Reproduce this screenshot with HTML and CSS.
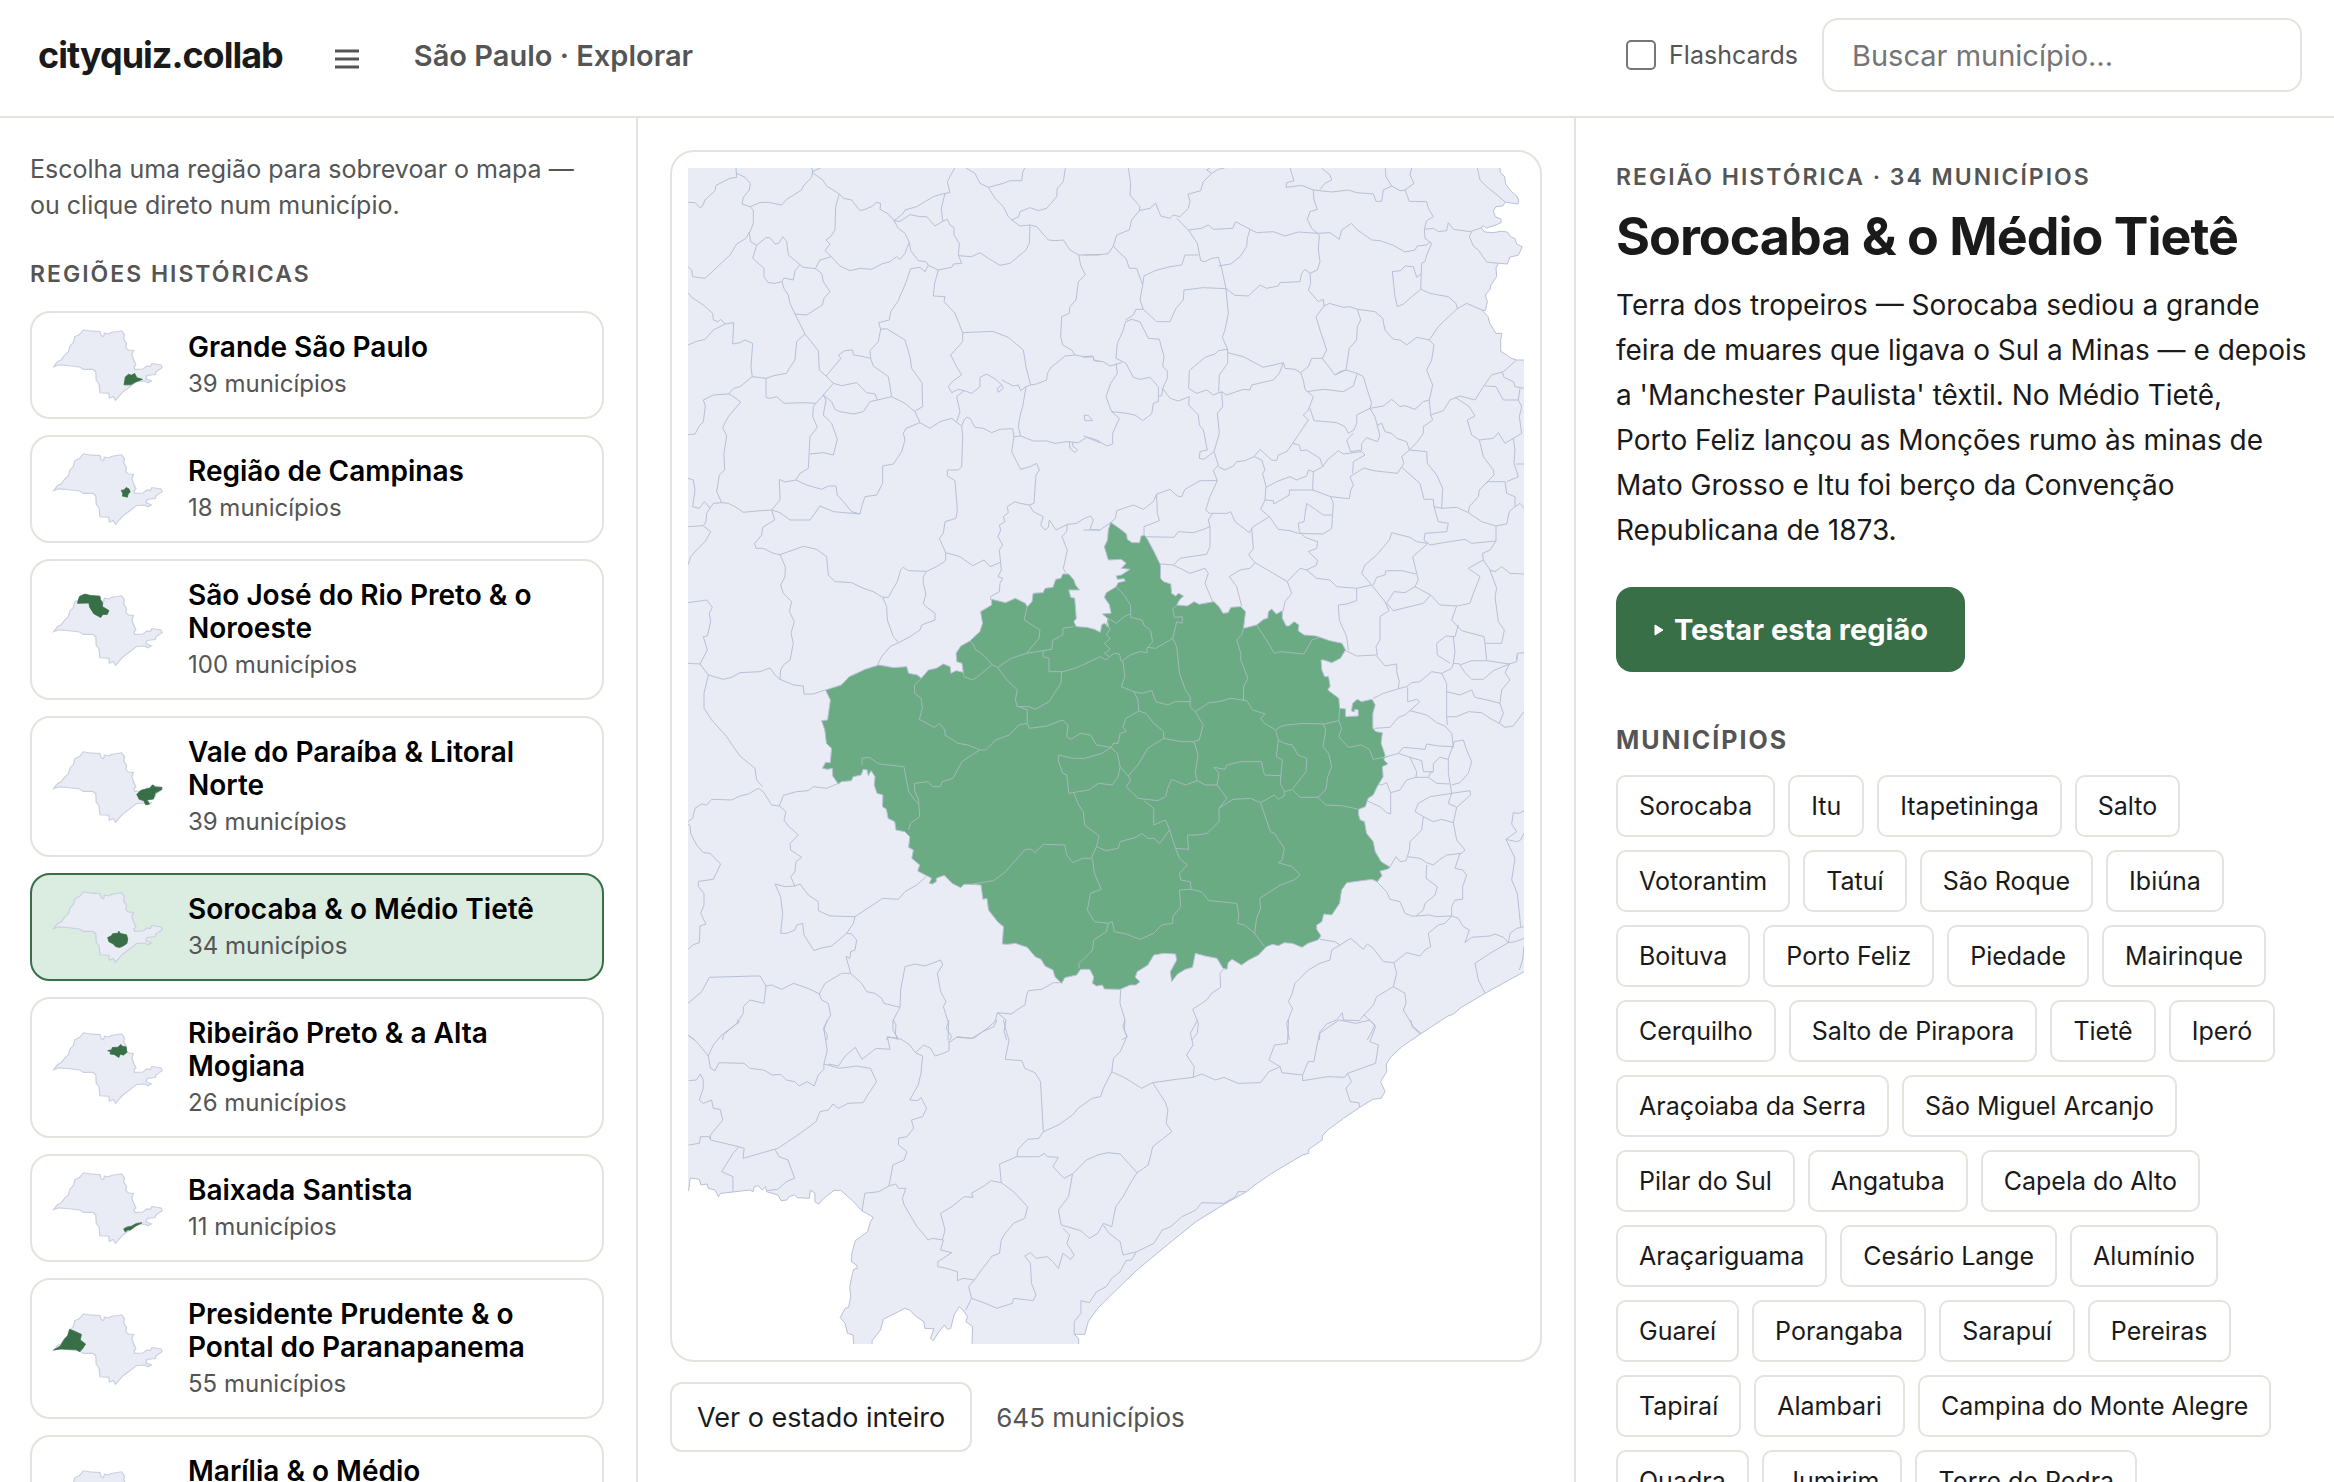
FILE: index.html
```html
<!DOCTYPE html>
<html lang="pt-BR">
<head>
<meta charset="utf-8">
<meta name="viewport" content="width=device-width, initial-scale=1">
<title>cityquiz.collab</title>
<link rel="stylesheet" href="styles.css">
</head>
<body>
<svg class="defs" aria-hidden="true">
  <symbol id="state" viewBox="0 0 112 76">
    <path class="mini-land" transform="scale(.4095 .3444) translate(-128 -90)" d="M132 205 142 190 150 186 160 170 168 162 172 145 180 135 184 118 195 112 205 98 225 102 245 103 248 115 254 118 256 108 268 110 272 106 298 101 305 113 303 125 310 138 308 150 315 157 327 158 323 170 327 185 333 200 328 206 330 213 350 212 360 203 368 205 372 196 394 200 397 208 382 220 380 228 360 231 357 240 371 246 362 252 355 247 335 248 320 262 300 280 283 303 278 292 268 297 267 282 245 281 243 255 236 245 235 220 228 213 205 213 195 206 165 202 145 200Z"/>
  </symbol>
</svg>

<header class="topbar">
  <a class="brand" href="#">cityquiz.collab</a>
  <button class="menu" type="button" aria-label="Menu">
    <svg width="24" height="20" viewBox="0 0 24 20"><path d="M0 2h24M0 10h24M0 18h24" stroke="currentColor" stroke-width="3"/></svg>
  </button>
  <span class="crumb">São Paulo · Explorar</span>
  <label class="flash"><input type="checkbox">Flashcards</label>
  <input class="search" type="search" placeholder="Buscar município…" aria-label="Buscar município">
</header>

<div class="layout">
  <aside class="sidebar">
    <p class="hint">Escolha uma região para sobrevoar o mapa — ou clique direto num município.</p>
    <h2 class="label">Regiões históricas</h2>
    <div class="regions">
      <button class="region" type="button">
        <svg class="mini" viewBox="0 0 112 76"><use href="#state"/><path class="mini-area" transform="scale(.4095 .3444) translate(-128 -90)" d="M304 258 307 235 315 227 322 230 330 225 335 237 349 242 332 250 320 258Z"/></svg>
        <span class="region-text"><span class="name">Grande São Paulo</span><span class="count">39 municípios</span></span>
      </button>
      <button class="region" type="button">
        <svg class="mini" viewBox="0 0 112 76"><use href="#state"/><path class="mini-area" transform="scale(.4095 .3444) translate(-128 -90)" d="M297 204 304 203 309 196 316 200 319 209 314 215 312 224 300 221 301 214Z"/></svg>
        <span class="region-text"><span class="name">Região de Campinas</span><span class="count">18 municípios</span></span>
      </button>
      <button class="region" type="button">
        <svg class="mini" viewBox="0 0 112 76"><use href="#state"/><path class="mini-area" transform="scale(.4095 .3444) translate(-128 -90)" d="M190 123 195 103 208 96 222 100 245 102 246 112 252 122 251 132 267 144 263 155 252 155 247 164 230 153 220 134 218 122Z"/></svg>
        <span class="region-text"><span class="name">São José do Rio Preto &amp; o Noroeste</span><span class="count">100 municípios</span></span>
      </button>
      <button class="region" type="button">
        <svg class="mini" viewBox="0 0 112 76"><use href="#state"/><path class="mini-area" transform="scale(.4095 .3444) translate(-128 -90)" d="M335 222 345 210 366 204 374 194 380 200 397 202 395 208 380 218 376 235 360 238 366 250 357 252 352 240 341 236Z"/></svg>
        <span class="region-text"><span class="name">Vale do Paraíba &amp; Litoral Norte</span><span class="count">39 municípios</span></span>
      </button>
      <button class="region selected" type="button" aria-pressed="true">
        <svg class="mini" viewBox="0 0 112 76"><use href="#state"/><path class="mini-area" transform="scale(.4095 .3444) translate(-128 -90)" d="M264 231 273 226 276 220 290 218 291 212 295 219 310 223 313 235 311 248 301 256 293 260 283 257 278 250 267 243Z"/></svg>
        <span class="region-text"><span class="name">Sorocaba &amp; o Médio Tietê</span><span class="count">34 municípios</span></span>
      </button>
      <button class="region" type="button">
        <svg class="mini" viewBox="0 0 112 76"><use href="#state"/><path class="mini-area" transform="scale(.4095 .3444) translate(-128 -90)" d="M264 150 274 147 275 141 289 140 296 132 300 137 309 139 311 155 302 163 295 160 291 170 280 161 270 160 271 153Z"/></svg>
        <span class="region-text"><span class="name">Ribeirão Preto &amp; a Alta Mogiana</span><span class="count">26 municípios</span></span>
      </button>
      <button class="region" type="button">
        <svg class="mini" viewBox="0 0 112 76"><use href="#state"/><path class="mini-area" transform="scale(.4095 .3444) translate(-128 -90)" d="M303 261 307 270 313 264 320 264 331 254 348 243 334 245 322 253 310 256Z"/></svg>
        <span class="region-text"><span class="name">Baixada Santista</span><span class="count">11 municípios</span></span>
      </button>
      <button class="region" type="button">
        <svg class="mini" viewBox="0 0 112 76"><use href="#state"/><path class="mini-area" transform="scale(.4095 .3444) translate(-128 -90)" d="M132 203 148 192 158 172 166 162 171 143 186 150 200 158 197 174 210 186 203 199 196 208 186 202 165 201 150 200Z"/></svg>
        <span class="region-text"><span class="name">Presidente Prudente &amp; o Pontal do Paranapanema</span><span class="count">55 municípios</span></span>
      </button>
      <button class="region" type="button">
        <svg class="mini" viewBox="0 0 112 76"><use href="#state"/></svg>
        <span class="region-text"><span class="name">Marília &amp; o Médio Paranapanema</span><span class="count">51 municípios</span></span>
      </button>
    </div>
  </aside>

  <main class="stage">
    <div class="map-card">
      <svg class="map" viewBox="688 168 836 1176" role="img" aria-label="Mapa dos municípios">
        <rect class="land" x="688" y="168" width="836" height="1177"/>
        <!-- north-west municipalities -->
        <path class="line" transform="translate(660 140) scale(.33333)" d="M84 187 105 188 120 203 128 198 135 180 165 152 168 136 210 115 230 112 228 84M230 100 255 112 271 130 268 150 250 172 246 192 270 200 300 188 325 187 365 195 380 178 425 150 430 138 455 112 458 94 482 84M455 84 460 100 488 120 500 138 538 162 550 175 575 180 600 212 615 208 635 200 650 187 662 190 660 208 685 222 702 242 715 265 735 280 748 308 752 332 775 362 798 365 805 376 835 390 875 382 880 372 905 370 895 345 898 310 882 285 882 262 870 255 862 238 848 244 825 258 800 230 780 230 750 224 720 244 702 242M702 242 728 222 735 210 770 200 820 170 855 160 870 158 862 125 884 84M855 160 850 180 844 205 848 244M538 162 527 200 525 270 512 290 498 300 510 312 495 332 514 350 480 360 466 386 430 382 420 374 385 345 380 305 368 290 356 310 345 312 330 293 318 293 290 316 272 305 268 280 280 250 280 210 270 200M268 276 258 295 230 312 210 345 160 392 135 415 98 410 95 390 84 380M290 316 278 355 312 385 312 410 325 428 345 430 366 425 372 414 400 420 405 392 420 374M366 425 372 445 385 465 390 490 405 522 435 582 475 632 478 690 498 708 520 730 490 765 468 790 430 788 372 790 350 770 330 775 318 772 318 715 277 710M466 386 485 400 490 425 510 455 492 475 487 495 440 525 405 522M514 350 540 378 570 392 600 385 635 388 665 372 690 365 710 350 720 358 735 340 746 310M84 458 95 472 130 495 158 520 160 540 175 545 182 538 195 552 221 548 218 612 240 608 255 600 278 610 273 680 277 712M195 552 160 570 135 598 110 604 84 615M277 710 240 740 222 745 205 762 160 765 130 780 136 798 130 845 118 858 105 882 84 884M205 762 218 768 242 786 205 830 188 862 200 888 192 940 194 990 178 1005 170 1055 185 1088M318 715 345 706 380 700 388 685 405 660 410 605 435 582M835 390 824 430 820 468 855 470 852 485 885 520 908 578 998 574 1045 592 1090 630 1098 680 1112 735M805 376 795 395 780 382 752 386 735 435 720 468 715 482 692 515 688 540 656 548 662 568 655 605 630 632 632 655 600 648 580 645 578 630 555 632 535 645 543 655 498 708M662 568 680 566 735 600 750 650 755 685 786 728 788 800 762 815M632 655 640 678 685 710 695 770 652 780 630 785 610 815 580 822 540 815 525 808 515 785 490 765M520 730 545 737 590 728 620 758 645 762 652 780M695 770 735 790 765 815 780 848 810 865 840 845 875 835 905 858 908 890 905 980 895 990 862 990 862 1008 885 1022 892 1110 888 1135 855 1145 850 1180 838 1195 857 1238M780 848 738 865 730 880 735 900 725 935 700 972 668 978 668 1030 650 1065 615 1070 605 1100 600 1122 575 1115 550 1085 532 1065 528 1038 505 1038 485 1048 440 1035 408 1020 375 1026 358 1018 360 1080 335 1110M408 1020 420 1000 445 985 450 890 472 862 458 830 460 800 468 790M490 765 498 780 490 825 515 850 532 898 520 945 490 938 450 942M600 1122 520 1115 480 1098 450 1140 390 1140 360 1118 335 1110 290 1113 250 1117 225 1100 205 1090 185 1088 160 1090 150 1104 133 1085 118 1105 98 1100 105 1050 100 1020 84 1015M150 1104 140 1120 138 1145 130 1157 84 1160M130 1157 152 1175 135 1205 110 1230 92 1250 84 1275M335 1110 344 1140 308 1162 305 1185 284 1210 288 1225 310 1225 340 1240 360 1244 405 1228 430 1219 470 1228 500 1250 505 1305 525 1325 575 1328 610 1345 640 1355 668 1372 685 1372 700 1345 712 1325 722 1290 730 1282 745 1292 800 1294 830 1280 857 1262 857 1238 900 1250 938 1277 972 1260 990 1280 1020 1268M360 1244 376 1280 375 1310 362 1335 370 1360 395 1385 388 1415 403 1445 393 1480 400 1510 390 1560M668 1372 680 1400 682 1440 700 1490 716 1508 690 1520 665 1550 652 1575M716 1508 750 1490 780 1470 785 1455 825 1440 825 1420 798 1400 790 1390 798 1362 790 1330 790 1310 800 1294M84 1388 140 1380 157 1402 148 1420 152 1445 142 1488 130 1490 142 1530 120 1572M905 858 912 840 920 832 930 835 945 862 970 865 995 878 1020 868 1058 866 1062 890 1055 935 1070 965 1082 988 1110 980 1130 970 1138 990 1128 1005 1122 1090 1108 1095 1080 1090 1065 1085 1042 1100 1045 1118 1030 1130 1035 1145 1018 1155 1022 1170 1014 1190 1028 1215 1018 1230 1024 1290 1014 1310 1028 1315 1020 1330 1018 1355 992 1370 992 1380M1108 1095 1120 1115 1150 1130 1142 1155 1155 1170 1165 1162 1168 1140 1188 1170 1222 1153 1250 1150 1270 1137 1292 1128 1300 1140 1290 1168 1320 1170M1222 1153 1220 1175 1206 1190 1222 1230 1210 1285 1218 1300M890 845 900 815 890 770 912 752 895 748 875 758 865 740 880 722 905 705 890 680 872 645 908 605 908 578M912 752 935 760 960 740 960 712 980 702 1010 720 1025 735 1030 745 1015 757 1012 745 1025 735M1025 720 1060 738 1075 735 1082 752 1098 740 1112 735 1130 732 1160 720 1162 700 1175 680 1195 665 1215 648 1245 645 1270 650 1298 648 1302 660 1320 665M1098 740 1088 800 1082 820 1075 860 1082 888 1062 890M1082 888 1120 903 1160 903 1185 910 1220 905 1255 908 1280 892 1320 908M1228 905 1230 925 1245 938 1253 930 1238 918 1238 905M1272 826 1285 826 1298 842 1275 842ZM918 84 945 100 960 130 985 142 1005 175 1030 200 1045 230 1062 245 1080 258 1110 255 1130 260 1165 300 1185 302 1210 300 1230 330 1256 345 1285 345 1320 345M985 142 1030 130 1050 122 1085 122 1088 98 1094 84M1216 84 1210 125 1192 145 1190 170 1160 205 1135 212 1110 203 1080 215 1076 230 1055 240M1110 255 1108 310 1098 330 1050 370 1020 376 985 355 960 338 935 350 895 347M1256 345 1262 375 1276 405 1255 425 1248 480 1230 500 1228 520 1205 530 1202 590 1208 615 1235 630 1245 645"/>
        <!-- north-east municipalities -->
        <path class="line" transform="translate(1090 140) scale(.33333)" d="M-20 345 40 343 55 340 70 318 80 285 118 270 125 240 148 212 150 200 120 165 122 130 115 84M148 212 180 205 197 190 212 228 240 235 250 225 270 230 295 205 300 185 294 163 332 152 340 125 365 100 385 88 404 84M365 100 350 90 360 84M70 318 90 340 108 355 118 385 140 385 158 435 150 480 160 508 200 545 240 545 258 505 280 480 282 450 340 443 408 446 395 385 385 352 365 355 345 365 332 362 322 310 295 270 260 235M158 435 162 408 195 392 240 380 275 375 285 345 325 345M295 270 335 265 355 255 370 268 428 265 437 245 480 268 500 278 550 275 585 288 625 276 685 280M480 268 472 295 470 320 450 350 422 372 385 378M408 446 435 466 475 468 510 435 530 445 565 438 570 428 630 425 635 400 645 388 660 400 682 390 690 365 685 330 688 285 665 265 652 238 660 215 682 208 672 180 670 150 635 136 588 142 590 128 612 122 600 84M670 150 725 156 775 150 800 158 850 162 858 184 875 184 880 150 905 138 930 152 945 150 972 130 960 105 965 84M905 138 888 110 886 84M690 148 705 130 725 120 720 105 695 84M945 150 958 184 1010 185 1015 205 1030 230 1010 242 1003 268 1005 295 1025 310 1010 345 1005 365 995 370 992 448 940 492 922 500 915 470 907 395 932 392 945 378 970 380 980 412 995 400M685 280 720 278 748 298 755 270 785 250 800 268 845 300 870 302 910 316 945 336 975 330 982 318 1010 315 1020 305M1003 268 1030 265 1045 275 1070 272 1075 248 1090 268 1140 275 1178 262M1145 275 1138 290 1150 318 1165 330 1190 366 1226 370M660 400 662 430 655 450 685 485 700 478 702 498 678 530 690 570 710 630 697 655 735 705 768 690 778 625 800 600 802 560 812 540 802 508 780 500 760 502 718 490 702 498M802 508 855 515 878 535 885 570 910 598 930 600 950 615 980 592 1018 600 1045 560 1060 545 1102 506 1098 490 1075 470 1045 465 1020 460 992 448M1102 506 1130 490 1176 510M1018 600 1032 615 1025 660 1010 690 1028 735 1018 780 1022 825 1060 812 1080 780 1110 768 1155 780 1180 740 1205 705 1240 695 1280 660M408 446 415 520 405 570 397 592 413 628 385 632 375 642 345 652 298 692 296 745 320 760 350 750 370 765 395 755 410 765 460 748 480 750 485 735 550 720 568 700 580 668M413 628 413 670 388 705 386 755M413 638 460 650 520 682 580 668 585 685 615 688 632 698 655 680 665 655 697 655M632 698 640 720 645 748 670 770 655 810 640 825 655 840 608 910M650 755 700 748 760 755 790 738 802 700 768 690 750 695 735 705M660 805 672 842 740 848 765 860 775 880 792 870 800 850 800 825 840 805 845 790 832 750 820 710 802 700M840 805 880 798 905 778 930 800 945 797 975 808 1000 785 1018 780M840 805 855 830 870 888 862 905 830 893 815 910 815 930 782 935 770 900 790 880M862 855 875 850 885 875 905 880 920 895 950 905 958 930 980 908 1000 880 1000 860 1028 840 1022 825M160 508 138 508 130 525 107 540M107 545 125 538 150 545 175 595 208 598 222 650 218 680 232 692 232 715 218 745 240 775 265 783 298 770M107 545 98 575 82 610 78 655 108 670 130 712 150 718 180 712 205 740 205 768 215 768 218 745M-20 652 10 650 12 662 40 665 60 678 95 668M78 670 82 700 62 730 48 770 65 815 110 820 135 825 158 842 185 822 190 790 205 785 205 768M65 815 88 835 68 880 68 912 50 918 20 900 -20 888M298 770 296 795 325 825 328 855 340 870 352 930 330 935 328 955 342 958 372 935 388 880 382 820 398 800 395 755M372 935 385 975 370 992 382 1022 360 1070 347 1110 358 1120 412 1120 422 1115 435 1145 478 1178 490 1160 538 1130 512 1108 525 1080 528 1040 518 1000 525 990 515 960 492 950 465 962 440 965 430 978 405 990 385 980M492 950 510 928 545 960 560 962 565 945 590 935 608 910 628 915 632 932 650 930 690 955 698 980 712 960 745 932 760 942 815 935 825 945 790 965 788 1000M698 980 670 995 655 990 650 1008 620 1020 600 1010 560 1025 528 1042M382 1022 330 1022 285 1048 275 1070 262 1068 240 1048 200 1062 190 1085 160 1108 130 1095 80 1112 76 1135 62 1148 30 1170 -20 1170M200 1062 202 1120 208 1142 162 1160 162 1190 252 1192 265 1175 310 1178 335 1170 360 1160 355 1140 368 1120M670 995 668 1050 722 1070 778 1076 782 1050 790 1035 780 1010 822 984 850 992 922 1000 942 970 935 950 958 930 1010 935 1012 970 1040 1005 1058 1045 1055 1105 1032 1100 1030 1078 1002 1078 990 1030 935 982M525 1080 550 1082 552 1092 598 1065 598 1050 668 1050M722 1070 730 1090 725 1165 700 1182 625 1180 600 1172 565 1168 538 1130M728 1125 700 1125 650 1090 642 1145 625 1150 628 1175 645 1192 683 1205 680 1225 655 1235 682 1260 680 1275 650 1290 630 1285 592 1325 605 1360 585 1385 580 1412M485 1165 490 1225 476 1245 495 1268 550 1300 592 1325M495 1268 480 1285 450 1290 418 1310 440 1340 455 1398M360 1160 360 1220 350 1243 300 1250 270 1255 250 1275 212 1272M250 1275 300 1300 345 1285 355 1300 345 1330 368 1385M650 1290 680 1315 720 1320 740 1340 800 1345 845 1335 885 1385 897 1412 870 1430 870 1500 858 1520 862 1545 800 1548 768 1532M800 1345 800 1382 770 1392 745 1395 748 1440 770 1490 775 1530M845 1335 815 1300 825 1275 860 1245 898 1200 905 1178 960 1192 980 1205 1012 1210M1012 1212 968 1250 985 1320 975 1340 945 1358 912 1355 890 1390 910 1412 1000 1390 1022 1365 975 1340M850 1335 860 1312 885 1305 888 1292 935 1292 978 1302M1055 1105 1100 1102 1135 1118 1138 1100 1165 1070 1168 1050 1212 1005 1210 990 1180 950 1168 900 1145 885 1132 840 1155 828 1138 800 1095 772M1185 1032 1195 1025 1245 1025 1250 1060 1275 1070 1275 1100 1258 1115 1250 1152 1218 1158 1175 1145 1135 1118M1032 1100 1045 1145 1075 1150 1070 1175 1005 1180 1002 1200 1020 1215 1060 1208 1125 1198 1145 1210 1218 1203 1200 1230 1178 1240 1180 1260 1135 1285 1170 1310 1150 1360 1140 1390 1100 1398 1050 1395 1022 1365M1218 1158 1218 1203M1180 1260 1200 1290 1220 1345 1215 1370 1225 1445 1243 1470 1235 1510 1185 1510 1182 1490 1115 1472 1085 1440 1100 1398M1200 1290 1215 1295 1235 1280 1260 1300 1302 1302M1168 900 1210 895 1225 878 1245 910 1270 895 1295 880 1288 830 1295 800 1285 780 1240 780 1218 740 1185 738M1237 697 1242 712 1270 725 1275 740 1302 745M1270 895 1275 930 1272 970 1285 1010 1250 1025M1278 972 1302 972M1275 1100 1290 1090 1302 1105M1285 780 1290 745M1162 84 1170 120 1190 140 1215 160 1246 186M1105 1455 1095 1490 1068 1488 1040 1510 1042 1545 1080 1570M1090 1490 1095 1535 1090 1570M1185 1510 1190 1562M1280 1560 1282 1540 1302 1538"/>
        <!-- south-west municipalities -->
        <path class="line" transform="translate(660 640) scale(.33333)" d="M120 72 84 70M120 72 145 105 190 118 215 112 240 98 300 95 330 84 345 105 360 118 400 135 430 138 432 162 460 162 495 150M390 60 370 75 362 90 360 118M145 105 132 160 132 205 155 240 200 290 220 320 240 348 285 385 290 420 308 440M84 545 98 535 105 505 125 492 140 495 155 478 215 480 240 468 265 462 295 445 310 455 335 495 358 498 370 466 410 455 445 452 460 440 500 445 535 430M84 552 90 556 92 580 110 615 130 638 150 640 182 672 160 718 115 724 115 740 132 760 132 795 122 820 138 852 120 858 118 908 100 914 84 928M358 498 378 515 372 540 385 558 415 585 390 610 392 630 425 652 408 665 405 695 392 710 405 738 420 732 445 765 475 785 475 812 510 828 585 830 668 775 715 778 735 755 770 735 798 710M405 738 375 740 345 732 362 770 368 820 362 880 380 880 405 870 410 855 428 850 432 885 445 905 462 932 480 925 515 918 560 880 580 850 585 830M560 880 575 882 590 900 585 930 572 935 570 955 558 950 572 1000 545 1000 495 1030 478 1062 455 1050 430 1040 400 1030 365 1048 335 1035 318 1038 300 1008 285 1008 148 1012 125 1055 84 1090M318 1038 312 1090 270 1080 250 1100 250 1120 230 1150 190 1185 188 1200M478 1062 485 1080 505 1090 512 1125 490 1165 502 1185 500 1200M572 1000 605 1030 620 1055 645 1060 665 1075 672 1090 720 1102 722 1050 735 980 765 972 795 978 842 960 848 975 832 1000 842 1055 858 1085 850 1100 866 1150 864 1200M720 1102 700 1140 708 1155 706 1180 712 1200M680 1200 682 1192 715 1195M1200 1028 1180 1028 1145 1048 1105 1052 1100 1065 1095 1095 1070 1110 1055 1122 1012 1118 1005 1145 975 1170 940 1195 890 1192M1012 1118 1038 1140 1032 1175 1040 1200M84 1185 104 1200"/>
        <!-- coast and the capital's surroundings -->
        <path class="line" transform="translate(1090 640) scale(.33333)" d="M860 48 885 78 920 72 920 95 928 125 925 145M850 175 880 160 930 145 950 140 965 128 990 125 1025 95 1055 100 1085 85 1090 70M1110 72 1090 70M1055 100 1070 130 1070 230 1072 255M953 142 953 185 980 178 990 185 960 212 945 225 925 232 900 262 853 265M960 212 1010 225 1040 248 1065 258 1085 280 1090 320 1045 318 1010 312 1005 328 940 322 925 340 890 350M1190 62 1145 62 1110 75 1125 98 1145 118 1180 118 1210 92 1258 72 1190 62M1258 72 1245 98 1260 120 1235 150 1230 190 1240 220 1228 250 1200 235 1175 218 1135 215 1100 230 1070 230M1070 155 1110 165 1145 150 1155 172 1200 182 1230 190M1228 250 1245 262 1270 258 1302 215M1258 72 1280 65 1282 45M1088 320 1075 355 1075 400 1085 460M1088 325 1092 305 1120 300 1132 335 1145 365 1135 400 1110 428 1085 435M925 340 960 352 980 395 978 412 1015 412 1020 400 1030 395 1030 370 1050 352 1075 358M960 352 995 362 1000 395 1030 395M1015 412 1040 430 1078 432M978 412 950 420 930 450 902 458 890 428 875 435 860 432M902 458 902 522 890 518 870 500 830 482M1085 460 1020 470 985 490 975 515 1000 530 995 570 960 605 958 630 952 650 948 662 930 665 918 650 900 680M1000 530 1030 545 1055 538 1090 548 1100 502 1075 490 1085 460 1140 452 1142 465 1100 502M1090 548 1100 600 1125 630 1115 640 1070 645 1050 658 1030 675 1010 668 990 655 952 650M1110 640 1095 685 1118 690 1130 705 1118 740 1118 778 1095 780 1085 800 1085 828 1040 830 1015 825 985 828 965 828 945 820 930 785 900 778 890 755 860 725M1010 675 1008 715 1042 740 1035 765 1005 790 1000 810 978 828M1302 512 1288 520 1270 518 1265 552 1280 575 1248 598 1275 655 1265 720 1282 760 1292 860M1248 598 1280 605 1292 600 1302 580M1302 860 1280 865 1260 880 1255 908M1085 828 1105 835 1120 860 1138 870 1125 908 1145 892 1200 888 1215 882 1240 892 1255 908 1275 905 1302 895M1085 828 1065 850 1045 855 1015 880 1022 920 1005 930 990 948 950 938 912 968 880 965 850 925 832 912 820 928 782 895 750 915 735 905 690 898M750 915 725 930 720 960 690 970 655 990 615 1030 605 1065 595 1085 608 1105 590 1150 598 1200M1255 908 1200 940 1155 970 1165 1020 1185 1060M912 968 920 1000 910 1040 860 1070 850 1095 822 1125 808 1142 760 1140 757 1118 740 1140 710 1152 690 1175 688 1200M910 1040 945 1060 948 1090 940 1110 970 1160 995 1182M822 1125 855 1155 845 1175 832 1200M400 988 390 1000 392 1042 365 1060 350 1080 308 1108 325 1150 322 1180 305 1200M92 1050 90 1090 105 1140 103 1170 112 1190 95 1200M1302 918 1298 960 1288 990"/>
        <!-- southern municipalities -->
        <path class="line" transform="translate(660 1020) scale(.56122 .33333)" d="M51 48 62 60 75 85 86 108 95 75 110 45 130 20 142 5 137 0M86 108 90 145 98 152 105 128 150 130 160 145 185 150 200 165 215 163 225 180 240 185 248 198 262 185 275 198 282 165 292 148 292 132 298 90 292 30 298 0M300 132 318 138 330 108 348 82 360 118 385 85 410 88 405 50 430 58 445 75 455 98 470 75 482 85 490 108 505 100 515 92 515 62 520 50 510 25 515 0M424 55 415 30 415 0M515 68 530 50 555 55 575 35 595 20 600 0M455 98 468 108 465 160 460 195 445 240 460 242 465 232 475 265 468 290 448 300 452 325 440 350 425 355 425 375 440 395 435 420 415 435 408 498M292 132 320 145 350 138 375 145 386 185 370 225 362 248 335 250 318 265 308 252 300 270 285 275 278 305 250 340 210 385 148 415 150 385 135 378 90 360 88 350 72 350 70 370 51 375M51 182 65 180 72 162 77 180 77 205 70 240 77 250 92 240 95 265 107 268 112 300 90 345 90 360M140 382 130 400 110 455 130 470 130 515M205 388 212 410 228 420 240 475 225 485 210 508 190 512M612 0 618 40 622 60 615 118 645 122 650 145 668 158 678 185 683 335 675 355 655 358 638 388 636 410 605 432 608 488 630 515 655 560 650 595 630 610 615 640 608 660 605 700 592 708 575 745 560 780 540 775 530 782 530 755 510 745 495 740 495 725 520 698 500 690 505 660 485 655 478 660 458 620 435 555 432 535 438 505 425 505 420 492 408 498 390 515 365 520 360 573M608 488 590 482 580 495 555 520 558 532 542 530 520 560 500 580 508 630 503 660M683 335 710 315 735 285 745 265 770 235 785 230 790 205 805 155 808 115 820 95 832 50 825 20 828 0M805 155 830 175 858 205 878 188 920 178 950 172 952 140 938 105 950 75 945 40 958 0M950 172 965 162 990 180 1005 172 1030 190 1070 188 1085 155 1105 140 1085 120 1095 75 1118 70 1120 0M1105 140 1108 158 1145 165 1155 125 1165 125 1175 40 1210 0 1240 10 1265 0 1275 20 1265 65 1280 75 1275 130 1225 160 1220 172 1190 170 1160 178 1145 182 1145 165M1225 160 1232 185 1222 205 1230 245 1245 248 1247 262M878 188 890 220 900 245 905 270 902 310 912 335 878 380 870 435 850 458 835 430 820 402 798 398 780 405 760 420 735 462 720 475 700 440 710 412 690 410 685 400 675 410 636 410M735 462 728 530 710 570 715 615 750 632 765 655 780 640 790 610 805 620 812 560 825 530 838 490 850 458M790 615 800 640 820 665 825 705 850 695 880 670 895 630 910 620 930 590 955 570 965 548 1005 550 1025 530 1030 515 1045 515M718 625 730 645 725 670 738 705 732 718 718 700 710 745 700 725 690 710 670 715 660 698 650 708 660 730 662 790 670 825 665 842 630 835 628 850 600 865 580 850 555 835 550 800 560 780M555 835 545 870M848 698 840 720 830 722 820 755 805 775 795 800 778 815 765 848 750 842 750 880 738 905 738 943M1355 42 1340 20 1338 0"/>
        <!-- outside the state -->
        <path class="outside" transform="translate(1090 140) scale(.33333)" d="M1230 84 1231 98 1244 110 1247 132 1263 153 1280 168 1286 180 1284 192 1270 190 1246 186 1238 198 1218 200 1210 213 1216 230 1234 238 1233 248 1215 256 1190 264 1178 257 1174 264 1184 276 1210 278 1232 274 1252 276 1262 290 1275 296 1280 312 1296 320 1290 336 1284 346 1260 351 1252 372 1226 370 1218 384 1220 410 1202 436 1200 448 1186 465 1192 485 1186 512 1176 510 1194 530 1200 552 1218 580 1236 580 1232 600 1232 634 1252 646 1262 654 1280 660 1400 661 1400 0 1230 0Z"/>
        <path class="outside" transform="translate(660 1020) scale(.56122 .33333)" d="M1560 -164 1539 -144 1470 -80 1426 -36 1414 -18 1404 -12 1393 0 1355 42 1322 80 1303 110 1294 132 1295 155 1284 185 1292 215 1285 235 1270 238 1247 262 1218 295 1190 330 1180 348 1180 360 1156 388 1156 400 1145 405 1090 460 1060 495 1045 515 1005 553 955 605 900 680 850 750 810 815 780 865 763 905 757 943 738 943 746 955 746 1100 1700 1100 1700 -164Z"/>
        <path class="outside" transform="translate(660 1020) scale(.56122 .33333)" d="M556 972 557 920 545 905 548 890 540 870 533 860 524 885 518 925 512 928 507 915 495 940 487 962 482 955 488 926 472 925 470 905 455 888 445 870 436 865 425 875 398 898 393 930 378 962 376 1100 556 1100Z"/>
        <path class="outside" transform="translate(660 1020) scale(.56122 .33333)" d="M345 972 344 945 334 940 330 910 321 893 330 865 336 862 340 830 338 800 343 760 345 748 352 745 350 735 341 725 342 700 348 662 370 635 375 605 380 592 368 580 360 573 345 545 335 530 322 511 310 511 292 535 283 552 276 545 276 520 268 510 266 535 245 533 240 525 230 530 226 540 216 542 210 525 190 515 188 500 182 510 175 497 168 500 166 515 160 510 130 516 108 520 104 530 98 510 86 505 84 492 73 495 70 478 54 474 51 512 -50 512 -50 1100 345 1100Z"/>
        <!-- selected region -->
        <g transform="translate(790 510) scale(.39541 .33333)">
          <path class="area" d="M811 37 835 57 851 72 853 88 865 98 884 98 888 78 897 76 905 90 922 128 937 165 937 205 945 215 963 222 965 250 975 258 983 250 995 258 985 270 978 285 1005 288 1022 275 1035 283 1072 275 1085 290 1095 310 1108 308 1115 292 1140 290 1152 305 1147 355 1180 345 1198 328 1208 325 1210 305 1218 297 1230 312 1245 302 1245 325 1255 348 1262 348 1275 335 1287 345 1285 362 1300 375 1330 378 1365 392 1396 400 1405 420 1392 445 1370 458 1350 450 1343 450 1345 480 1352 500 1362 500 1366 528 1360 540 1388 565 1390 595 1405 597 1405 620 1437 618 1437 600 1428 598 1428 605 1420 603 1423 580 1435 568 1445 575 1472 568 1480 585 1474 610 1474 655 1482 665 1498 668 1495 700 1505 735 1502 750 1512 762 1498 770 1500 800 1485 830 1475 855 1462 865 1455 890 1438 898 1438 915 1442 930 1453 935 1458 970 1475 995 1480 1025 1495 1055 1518 1072 1510 1078 1492 1083 1497 1097 1485 1115 1472 1108 1408 1118 1395 1140 1390 1180 1370 1215 1350 1212 1345 1235 1332 1245 1332 1258 1343 1278 1335 1290 1310 1300 1295 1312 1270 1300 1250 1298 1235 1307 1220 1303 1205 1310 1185 1335 1160 1350 1142 1365 1118 1348 1108 1358 1105 1378 1095 1375 1080 1345 1050 1338 1025 1330 1018 1372 1000 1378 980 1392 965 1415 962 1385 978 1350 975 1332 945 1330 920 1335 905 1365 878 1385 873 1402 885 1415 875 1425 860 1425 835 1438 795 1437 790 1425 775 1428 765 1420 768 1400 758 1378 735 1378 725 1395 695 1403 687 1420 670 1400 665 1380 645 1368 635 1348 620 1340 600 1312 570 1300 550 1303 537 1302 540 1250 525 1235 502 1200 498 1165 488 1168 483 1125 455 1123 440 1123 432 1133 410 1120 390 1096 370 1105 370 1115 360 1122 352 1120 358 1105 323 1083 328 1065 308 1045 312 1020 300 1012 303 980 290 965 268 960 265 935 248 925 244 898 234 890 235 855 220 850 213 825 215 800 205 782 198 797 195 780 185 778 180 795 160 800 155 812 130 815 122 822 108 798 107 775 95 778 82 775 90 757 102 758 105 715 92 700 88 660 80 632 95 630 102 570 90 540 130 525 150 500 165 492 190 478 225 465 262 473 295 470 300 490 322 495 332 505 350 480 370 475 388 462 405 470 407 490 420 482 438 487 435 460 422 455 420 430 432 408 455 393 480 365 487 340 482 305 510 285 510 268 545 278 570 265 595 280 600 290 612 275 615 250 640 248 645 235 665 232 672 208 685 205 690 192 705 192 718 210 722 225 732 240 705 240 710 262 720 265 724 325 718 335 724 350 750 352 770 358 785 367 788 345 795 340 805 350 803 325 790 312 812 310 808 285 795 262 800 248 825 230 830 218 848 213 845 206 828 208 825 198 838 195 860 178 838 175 850 160 838 148 805 150 795 110 803 90 805 60Z"/>
          <path class="seam" d="M825 230 845 255 861 285 862 322 890 330 895 345 912 362 917 395 903 415 903 428 885 425 860 435M808 440 795 430 810 418 795 400 810 385 800 375 810 355 800 348 805 325 825 340 845 320 860 312M905 412 925 415 968 385 978 335 992 340 992 320 972 322 968 295 980 285M968 385 978 410 985 490 1000 540 1012 560 1012 590 1025 605 1060 578 1085 575 1115 565 1155 572 1170 600 1202 612 1190 625 1200 640 1228 660 1240 650 1255 645 1300 640 1350 642 1388 632 1390 595M1147 355 1142 375 1130 390 1140 430 1140 450 1158 505 1147 530 1147 572M1180 345 1210 400 1225 430 1240 425 1300 432 1320 390 1340 382M842 455 847 500 838 530 870 545 890 550 915 542 925 575 955 585 975 575 1012 575M808 440 820 430 833 432 838 455 860 435M808 440 800 450 785 440 740 465 720 475 690 485 655 485 655 445 640 440 640 422 662 418 665 390 690 375 690 355 718 350M600 290 592 330 632 360 630 385 598 430 560 445 525 472 512 465 485 430 470 420 462 400 455 393M640 422 598 430M525 472 545 505 575 540 570 570 575 590 605 590 620 598 655 575 685 520 687 485M438 485 440 500 462 510 485 490 510 465M332 505 315 525 315 550 332 565 335 595 327 628 365 652 378 640 392 660 392 675 425 700 450 705 480 720 495 720 520 690 555 675 578 645 600 640 600 600 575 588M600 640 605 655 650 648 690 630 703 645 700 680 710 688 735 670 760 675 775 705 812 712 818 700 830 700 835 670 850 665 842 650 850 625 882 603 880 570 870 545M882 603 900 610 920 640 945 665 945 685 990 695 1020 695 1035 690 1045 645 1025 605M945 685 905 715 880 765 855 798 835 770 828 730 812 712 790 730 745 745 715 745 680 735 678 750 690 790 700 795 705 850 755 840 780 820 815 825 830 800 835 770M855 798 862 810 850 830 880 865 930 872 950 860 955 835 965 808 1000 825 1030 812 1025 790 1032 735 1022 695M1030 812 1050 825 1080 825 1085 790 1072 772 1100 778 1105 765 1140 755 1192 755 1200 795 1242 797M1080 825 1105 865 1085 895 1120 868 1165 865 1190 878 1225 855 1235 868 1250 858 1250 845 1240 820 1245 750 1230 740 1235 690 1228 660M1235 690 1250 700 1270 705 1285 735 1307 745 1305 785 1270 838 1290 862 1335 862 1355 885 1400 888 1438 898M1348 640 1355 660 1348 710 1362 730 1370 770 1360 800 1355 840 1335 862M1250 845 1270 838M1388 632 1395 655 1388 680 1412 712 1445 705 1465 718 1475 748 1512 740M480 720 460 735 435 755 412 805 385 815 380 830 360 830 350 815 315 820 315 840 325 870 328 920 305 940 300 960M182 765 182 745 200 742 225 762 288 770 300 845 322 880M455 1123 515 1112 545 1085 595 1018 612 1018 620 1028 640 1003 695 1005 700 1035 715 1058 740 1045 762 1045 775 1010 782 978 745 945 742 905 730 885 718 850M775 1010 800 1022 830 1015 835 995 875 982 890 970 905 985 920 985 935 1000 960 960 950 930 930 940 920 945 920 895 895 872M960 960 975 1015 1008 1018 1005 975 1030 975 1055 970 1085 935 1085 895M1190 878 1205 930 1215 965 1225 970 1250 1015 1245 1050 1235 1058 1270 1070 1290 1095 1275 1110 1240 1125 1188 1165 1190 1195 1180 1225 1175 1270 1200 1310M975 1015 985 1045 1005 1065 985 1090 988 1110 1012 1115 1015 1138 985 1140 988 1190 968 1220 968 1240 940 1245 920 1270 885 1288 850 1272 820 1265 815 1235 805 1240 770 1235 752 1200 760 1150 787 1138 770 1090 765 1045M1015 1138 1040 1145 1060 1172 1130 1180 1135 1215 1132 1240 1150 1245 1175 1270M805 1240 800 1265 768 1290 765 1320 745 1345 730 1360 732 1375"/>
        </g>
      </svg>
    </div>
    <div class="map-actions">
      <button class="reset" type="button">Ver o estado inteiro</button>
      <span class="total">645 municípios</span>
    </div>
  </main>

  <section class="detail">
    <p class="label">Região histórica · 34 municípios</p>
    <h1 class="title">Sorocaba &amp; o Médio Tietê</h1>
    <p class="about">Terra dos tropeiros — Sorocaba sediou a grande feira de muares que ligava o Sul a Minas — e depois a 'Manchester Paulista' têxtil. No Médio Tietê, Porto&nbsp;Feliz lançou as Monções rumo às minas de Mato&nbsp;Grosso e Itu foi berço da Convenção Republicana de 1873.</p>
    <button class="start" type="button"><svg width="10" height="12" viewBox="0 0 10 12"><path d="M1 1 9 6 1 11Z" fill="currentColor" stroke="currentColor" stroke-linejoin="round"/></svg>Testar esta região</button>
    <h2 class="label strong">Municípios</h2>
    <div class="chips">
      <button class="chip" type="button">Sorocaba</button>
      <button class="chip" type="button">Itu</button>
      <button class="chip" type="button">Itapetininga</button>
      <button class="chip" type="button">Salto</button>
      <button class="chip" type="button">Votorantim</button>
      <button class="chip" type="button">Tatuí</button>
      <button class="chip" type="button">São Roque</button>
      <button class="chip" type="button">Ibiúna</button>
      <button class="chip" type="button">Boituva</button>
      <button class="chip" type="button">Porto Feliz</button>
      <button class="chip" type="button">Piedade</button>
      <button class="chip" type="button">Mairinque</button>
      <button class="chip" type="button">Cerquilho</button>
      <button class="chip" type="button">Salto de Pirapora</button>
      <button class="chip" type="button">Tietê</button>
      <button class="chip" type="button">Iperó</button>
      <button class="chip" type="button">Araçoiaba da Serra</button>
      <button class="chip" type="button">São Miguel Arcanjo</button>
      <button class="chip" type="button">Pilar do Sul</button>
      <button class="chip" type="button">Angatuba</button>
      <button class="chip" type="button">Capela do Alto</button>
      <button class="chip" type="button">Araçariguama</button>
      <button class="chip" type="button">Cesário Lange</button>
      <button class="chip" type="button">Alumínio</button>
      <button class="chip" type="button">Guareí</button>
      <button class="chip" type="button">Porangaba</button>
      <button class="chip" type="button">Sarapuí</button>
      <button class="chip" type="button">Pereiras</button>
      <button class="chip" type="button">Tapiraí</button>
      <button class="chip" type="button">Alambari</button>
      <button class="chip" type="button">Campina do Monte Alegre</button>
      <button class="chip" type="button">Quadra</button>
      <button class="chip" type="button">Jumirim</button>
      <button class="chip" type="button">Torre de Pedra</button>
    </div>
  </section>
</div>
</body>
</html>
```

FILE: styles.css
```css
:root {
  --ink: #1a1a1a;
  --muted: #555;
  --rule: #e4e4de;
  --green: #386f47;
  --land: #e9ecf5;
}

* { box-sizing: border-box; }

body {
  margin: 0;
  height: 100vh;
  display: flex;
  flex-direction: column;
  overflow: hidden;
  background: #fff;
  color: var(--ink);
  font-family: Inter, "Liberation Sans", sans-serif;
  font-size: 25px;
}

button, input { font: inherit; color: inherit; }
button { background: #fff; cursor: pointer; }
h1, h2, p { margin: 0; }
.defs { position: absolute; width: 0; height: 0; }

.topbar {
  flex: none;
  display: flex;
  align-items: center;
  padding: 18px 32px 24px 38px;
  border-bottom: 2px solid var(--rule);
}
.brand {
  color: var(--ink);
  font-size: 36px;
  font-weight: 700;
  letter-spacing: -1px;
  text-decoration: none;
}
.menu {
  display: flex;
  margin-left: 44px;
  padding: 8px;
  border: 0;
  color: var(--muted);
}
.menu svg { margin-top: 8px; }
.crumb {
  margin-left: 47px;
  color: var(--muted);
  font-size: 29px;
  font-weight: 600;
}
.flash {
  display: flex;
  align-items: center;
  gap: 13px;
  margin-left: auto;
  color: var(--muted);
}
.flash input {
  appearance: none;
  width: 30px;
  height: 30px;
  margin: 0;
  border: 2px solid #767676;
  border-radius: 5px;
  background: #fff;
}
.search {
  appearance: none;
  width: 480px;
  height: 74px;
  margin-left: 24px;
  padding: 0 28px;
  border: 2px solid var(--rule);
  border-radius: 16px;
  background: #fff;
  font-size: 29px;
}
.search::placeholder { color: #757575; }

.layout {
  flex: 1;
  min-height: 0;
  display: grid;
  grid-template-columns: 638px 1fr 760px;
}

.sidebar, .stage, .detail {
  overflow: auto;
  scrollbar-width: none;
}
.sidebar {
  padding: 33px 32px 32px 30px;
  border-right: 2px solid var(--rule);
}
.hint {
  color: var(--muted);
  line-height: 36px;
}
.label {
  color: var(--muted);
  font-size: 23px;
  font-weight: 600;
  line-height: 30px;
  letter-spacing: 2px;
  text-transform: uppercase;
}
.sidebar .label { margin: 36px 0 22px; }

.regions {
  display: flex;
  flex-direction: column;
  gap: 16px;
}
.region {
  display: flex;
  align-items: center;
  gap: 24px;
  padding: 18px 20px;
  border: 2px solid var(--rule);
  border-radius: 20px;
  color: #000;
  text-align: left;
}
.region.selected {
  border-color: var(--green);
  background: #dbece0;
}
.mini {
  flex: none;
  width: 112px;
  height: 76px;
  margin: -4px 0;
}
.mini-land {
  fill: var(--land);
  stroke: #c9cfe0;
  stroke-width: 3;
}
.mini-area {
  fill: var(--green);
  stroke: var(--green);
  stroke-width: 2;
}
.region-text {
  display: flex;
  flex-direction: column;
  gap: 4px;
}
.name {
  font-size: 28px;
  font-weight: 600;
  line-height: 33px;
}
.count {
  color: var(--muted);
  font-size: 24px;
  line-height: 31px;
}

.stage { padding: 32px; }
.map-card {
  padding: 16px;
  border: 2px solid var(--rule);
  border-radius: 24px;
}
.map {
  display: block;
  width: 100%;
  height: auto;
}
.land { fill: var(--land); }
.line, .outside, .area, .seam {
  stroke: #b8c0d6;
  stroke-width: 1px;
  stroke-linejoin: round;
  vector-effect: non-scaling-stroke;
}
.line, .seam { fill: none; }
.outside { fill: #fff; }
.area { fill: #6bab84; }
.seam { stroke: #a2b9b8; }

.map-actions {
  display: flex;
  align-items: center;
  gap: 24px;
  margin-top: 20px;
}
.reset {
  height: 70px;
  padding: 0 25px;
  border: 2px solid var(--rule);
  border-radius: 12px;
  font-size: 27px;
}
.total {
  color: var(--muted);
  font-size: 26px;
}

.detail {
  padding: 44px 22px 32px 40px;
  border-left: 2px solid var(--rule);
}
.title {
  margin-top: 15px;
  font-size: 52px;
  font-weight: 700;
  line-height: 60px;
  letter-spacing: -1px;
}
.about {
  margin-top: 16px;
  font-size: 28px;
  line-height: 45px;
}
.start {
  display: flex;
  align-items: center;
  gap: 10px;
  height: 85px;
  margin-top: 34px;
  padding: 0 37px 0 38px;
  border: 0;
  border-radius: 16px;
  background: var(--green);
  color: #fff;
  font-size: 29px;
  font-weight: 700;
}
.detail .strong {
  margin: 53px 0 20px;
  font-size: 25px;
  font-weight: 700;
}
.chips {
  display: flex;
  flex-wrap: wrap;
  gap: 13px;
}
.chip {
  height: 62px;
  padding: 0 21px;
  border: 2px solid var(--rule);
  border-radius: 10px;
}
```
